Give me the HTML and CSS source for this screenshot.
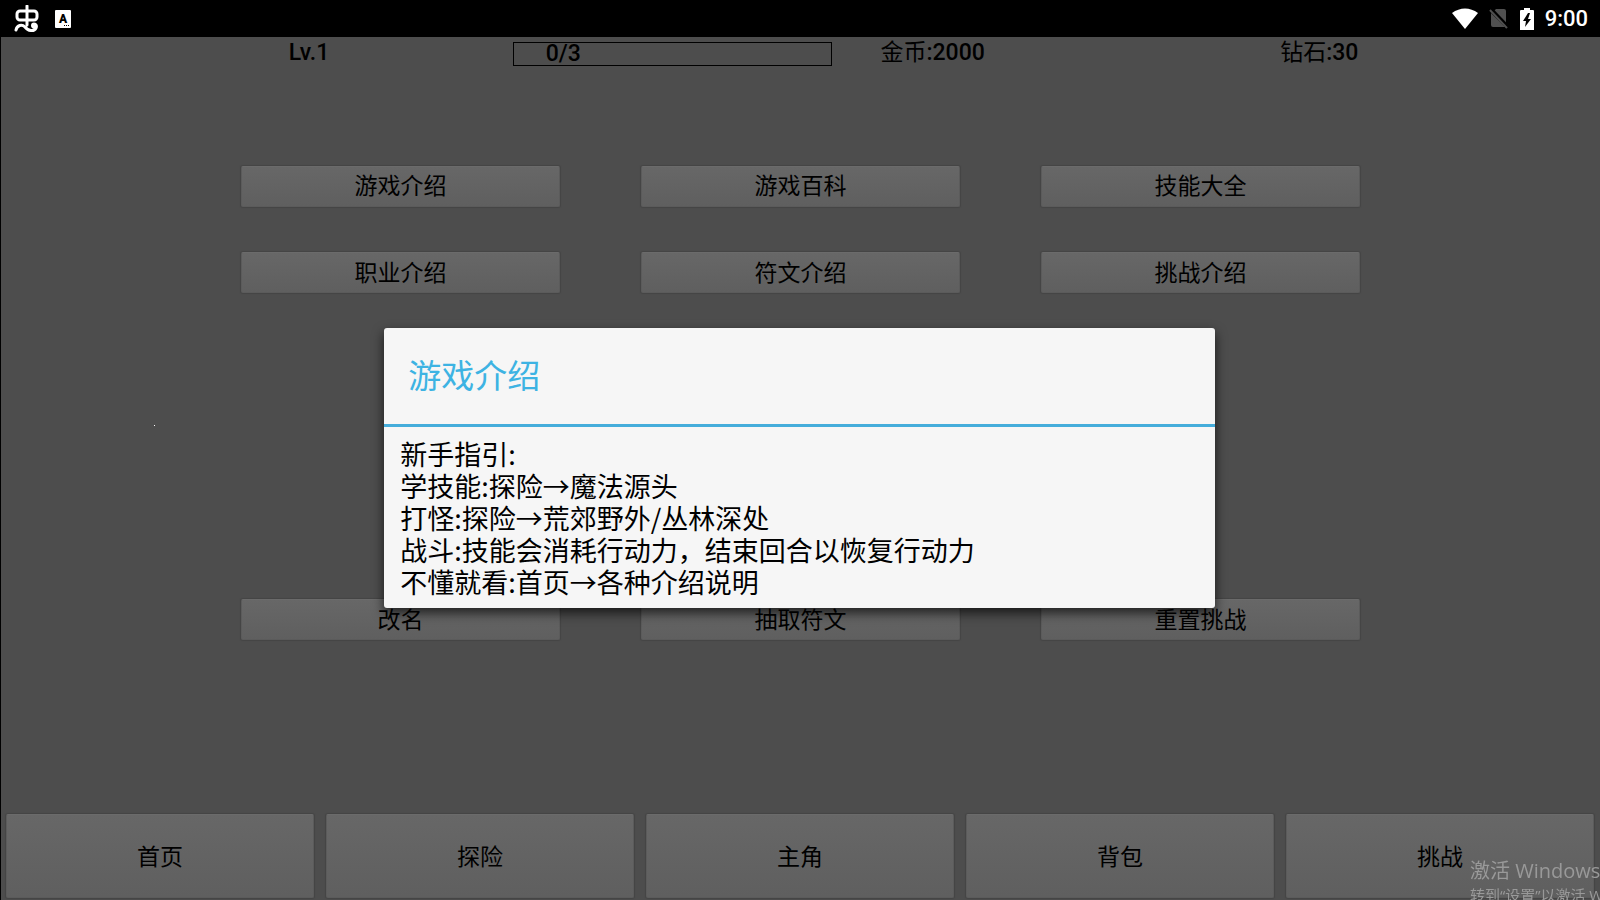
FILE: index.html
```
<!DOCTYPE HTML>
<html lang="zh-CN">
<head>
    <meta charset="UTF-8">
    <title>游戏介绍</title>
    <link rel="stylesheet" href="styles.css">
</head>
<body>
<div class="status">
    <div class="statusLeft">
        <svg class="icoBug" width="26" height="28" viewBox="0 0 26 28">
            <rect x="3" y="6" width="20" height="9" rx="3"/>
            <path d="M13 1V20M2 25C3 20 8 19 11 22C14 26 20 27 22 23C23 21 22 19 20 19C18 19 18 22 20 22"/>
        </svg>
        <svg class="icoA" width="16" height="18" viewBox="0 0 16 18">
            <rect width="16" height="18" rx="1" fill="#fff"/>
            <text x="8" y="13" text-anchor="middle">A</text>
            <path d="M9 15h1v1h-1zM11 15h1v1h-1zM13 15h1v1h-1z"/>
        </svg>
    </div>
    <div class="statusRight">
        <svg width="26" height="21" viewBox="0 0 26 21">
            <path d="M0 5C8 -1 18 -1 26 5L13 21Z" fill="#fff"/>
        </svg>
        <svg width="20" height="21" viewBox="0 0 20 21">
            <path d="M7 1H15Q17 1 17 3V17L4 4ZM2 5L16 19H4Q2 19 2 17Z" fill="#505050"/>
            <path d="M1 2L18 20" stroke="#505050" stroke-width="2"/>
            <path d="M3 1L19 18" stroke="#000" stroke-width="2"/>
        </svg>
        <svg width="14" height="22" viewBox="0 0 14 22">
            <path d="M4 0H10V2H13Q14 2 14 3V22H0V3Q0 2 1 2H4Z" fill="#fff"/>
            <path d="M8 5L3 13H6L5 19L11 11H8L10 5Z" fill="#000"/>
        </svg>
        <span>9:00</span>
    </div>
</div>
<div class="game">
    <div class="info">
        <div>Lv.1</div>
        <div class="exp">0/3</div>
        <div class="gold"><span>金币</span>:2000</div>
        <div><span>钻石</span>:30</div>
    </div>
    <div class="menu">
        <button>游戏介绍</button>
        <button>游戏百科</button>
        <button>技能大全</button>
        <button>职业介绍</button>
        <button>符文介绍</button>
        <button>挑战介绍</button>
        <button class="lastRow">改名</button>
        <button class="lastRow">抽取符文</button>
        <button class="lastRow">重置挑战</button>
    </div>
    <div class="nav">
        <button>首页</button>
        <button>探险</button>
        <button>主角</button>
        <button>背包</button>
        <button>挑战</button>
    </div>
    <i class="dot"></i>
    <!--弹窗-->
    <div class="mask">
        <div class="dialog" role="dialog" aria-labelledby="title">
            <h1 id="title">游戏介绍</h1>
            <p>新手指引:<br>
            学技能:探险→魔法源头<br>
            打怪:探险→荒郊野外/丛林深处<br>
            战斗:技能会消耗行动力，结束回合以恢复行动力<br>
            不懂就看:首页→各种介绍说明</p>
        </div>
    </div>
</div>
<div class="activate">
    <div class="actTitle">激活 Windows</div>
    <div class="actText">转到“设置”以激活 Windows。</div>
</div>
</body>
</html>
```
FILE: styles.css
```
*{
    box-sizing: border-box;
}
body{
    margin:0;
    height:100vh;
    overflow: hidden;
    display: flex;
    flex-direction: column;
    background: #000;
    font-family: Roboto,"Noto Sans CJK SC",sans-serif;
}
.status{
    display: flex;
    justify-content: space-between;
    align-items: center;
    height:37px;
    padding:0 12px 0 14px;
    color: #fff;
    font-size: 22px;
    font-weight: 500;
}
.statusLeft,.statusRight{
    display: flex;
    align-items: center;
    gap:11px;
}
.statusLeft{
    gap:15px;
}
.icoBug{
    fill: none;
    stroke: #fff;
    stroke-width: 3;
    stroke-linecap: round;
}
.icoA{
    font-size: 12px;
    font-weight: 900;
}
.game{
    flex: 1;
    position: relative;
    display: flex;
    flex-direction: column;
    margin-left: 1px;
    background: #4d4d4d;
}
.info{
    display: grid;
    grid-template-columns: 14fr 20fr 28fr 20fr;
    padding:5px 0 0 18%;
    font-size: 23px;
    line-height: 22px;
    font-weight: 500;
}
.info span{
    font-weight: 400;
}
.exp{
    border:1px solid #000;
    padding-left: 32px;
}
.gold{
    padding-left: 48px;
}
.menu{
    display: grid;
    grid-template-columns: repeat(3,1fr);
    grid-template-rows: repeat(6,1fr);
    align-items: center;
    column-gap:81px;
    height:520px;
    margin-top: 77px;
    padding:0 15%;
}
button{
    height:41px;
    border:1px solid #5b5b5b;
    border-top-color: #6b6b6b;
    border-radius: 2px;
    padding:2px 0 0;
    background: linear-gradient(#676767,#5f5f5f);
    box-shadow: 0 0 1px 1px #454545;
    color: #000;
    font: 23px/32px Roboto,"Noto Sans CJK SC",sans-serif;
}
.lastRow{
    grid-row: 6;
}
.nav{
    display: grid;
    grid-template-columns: repeat(5,1fr);
    gap:12px;
    margin-top: auto;
    padding:0 6px 2px 5px;
}
.nav button{
    height:84px;
    padding-top: 4px;
}
.dot{
    position: absolute;
    left:153px;
    top:388px;
    width:1px;
    height:1px;
    background: #fff;
}
.mask{
    position: absolute;
    inset:0;
    display: flex;
    justify-content: center;
    align-items: center;
    padding:0 2px 2px 0;
}
.dialog{
    width:52%;
    border-radius: 3px;
    background: #f6f6f6;
    box-shadow: 0 5px 12px rgba(0,0,0,.7);
}
.dialog h1{
    margin:0;
    padding:2px 24px 0;
    border-bottom:3px solid #45addb;
    color: #3db3e3;
    font-size: 33px;
    line-height: 94px;
    font-weight: 400;
}
.dialog p{
    margin:0;
    padding:11px 16px 10px;
    font-family: "Noto Sans CJK SC",sans-serif;
    font-size: 27px;
    line-height: 32px;
}
.activate{
    position: fixed;
    left:calc(100% - 130px);
    top:857px;
    color: #999;
    white-space: nowrap;
    pointer-events: none;
}
.actTitle{
    font: 20px/28px "Open Sans","Noto Sans CJK SC",sans-serif;
}
.actText{
    font: 15px/20px "Open Sans","Noto Sans CJK SC",sans-serif;
}
```
